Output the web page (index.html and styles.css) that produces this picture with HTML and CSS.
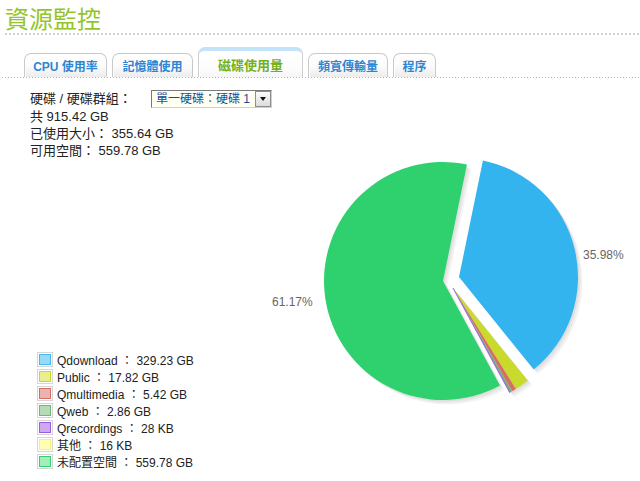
FILE: index.html
```html
<!DOCTYPE html>
<html lang="zh-Hant">
<head>
<meta charset="utf-8">
<title>資源監控</title>
<link rel="stylesheet" href="styles.css">
</head>
<body>
<div class="page">
  <h1 class="title">資源監控</h1>
  <div class="title-rule"></div>

  <div class="tabs">
    <div class="tab t1">CPU 使用率</div>
    <div class="tab t2">記憶體使用</div>
    <div class="tab t3 active">磁碟使用量</div>
    <div class="tab t4">頻寬傳輸量</div>
    <div class="tab t5">程序</div>
  </div>

  <div class="info">
    <div class="selector-row">
      <span class="sel-label">硬碟 / 硬碟群組：</span>
      <span class="select">
        <span class="select-text">單一硬碟：硬碟 1</span>
        <span class="select-btn"><span class="tri"></span></span>
      </span>
    </div>
    <div class="line">共 915.42 GB</div>
    <div class="line">已使用大小： 355.64 GB</div>
    <div class="line">可用空間： 559.78 GB</div>
  </div>

  <div class="chart">
    <ul class="legend">
      <li><span class="sw"><span class="c c-blue"></span></span>Qdownload ： 329.23 GB</li>
      <li><span class="sw"><span class="c c-yellow"></span></span>Public ： 17.82 GB</li>
      <li><span class="sw"><span class="c c-red"></span></span>Qmultimedia ： 5.42 GB</li>
      <li><span class="sw"><span class="c c-lgreen"></span></span>Qweb ： 2.86 GB</li>
      <li><span class="sw"><span class="c c-purple"></span></span>Qrecordings ： 28 KB</li>
      <li><span class="sw"><span class="c c-pale"></span></span>其他 ： 16 KB</li>
      <li><span class="sw"><span class="c c-green"></span></span>未配置空間 ： 559.78 GB</li>
    </ul>
    <svg class="pie" width="390" height="320" viewBox="0 0 390 320" xmlns="http://www.w3.org/2000/svg">
      <g class="shadow" fill="#000" fill-opacity="0.045">
        <g transform="translate(1.5,1.5)">
          <path d="M193,122 L249.97,226.48 A119,119 0 1 1 216.93,5.43 Z"/>
          <path d="M209,118 L232.93,1.43 A119,119 0 0 1 283.73,210.61 Z"/>
          <path d="M203,129 L277.73,221.61 A119,119 0 0 1 259.6,233.67 Z"/>
        </g>
        <g transform="translate(3,3)">
          <path d="M193,122 L249.97,226.48 A119,119 0 1 1 216.93,5.43 Z"/>
          <path d="M209,118 L232.93,1.43 A119,119 0 0 1 283.73,210.61 Z"/>
          <path d="M203,129 L277.73,221.61 A119,119 0 0 1 259.6,233.67 Z"/>
        </g>
        <g transform="translate(4.5,4.5)">
          <path d="M193,122 L249.97,226.48 A119,119 0 1 1 216.93,5.43 Z"/>
          <path d="M209,118 L232.93,1.43 A119,119 0 0 1 283.73,210.61 Z"/>
          <path d="M203,129 L277.73,221.61 A119,119 0 0 1 259.6,233.67 Z"/>
        </g>
      </g>
      <path fill="#2ed16e" d="M193,122 L249.97,226.48 A119,119 0 1 1 216.93,5.43 Z"/>
      <path fill="#33b4ef" d="M209,118 L232.93,1.43 A119,119 0 0 1 283.73,210.61 Z"/>
      <path fill="#c9da2c" d="M203,129 L277.73,221.61 A119,119 0 0 1 265.88,230.03 Z"/>
      <path fill="#d96d66" d="M203,129 L265.88,230.03 A119,119 0 0 1 262.14,232.27 Z"/>
      <path fill="#6fb870" d="M203,129 L262.14,232.27 A119,119 0 0 1 260.14,233.37 Z"/>
      <path fill="#9a5ce0" stroke="#9a5ce0" stroke-width="0.6" d="M203,129 L260.14,233.37 A119,119 0 0 1 259.6,233.67 Z"/>
      <text class="pct" x="333" y="100">35.98%</text>
      <text class="pct" x="22" y="147">61.17%</text>
    </svg>
  </div>
</div>
</body>
</html>
```

FILE: styles.css
```css
html, body {
  margin: 0;
  padding: 0;
  background: #ffffff;
  overflow: hidden;
}

body {
  font-family: "Liberation Sans", "Noto Sans CJK TC", sans-serif;
  color: #222;
}

.page {
  width: 640px;
  height: 481px;
}

.title {
  margin: 0;
  padding: 4px 0 0 5px;
  font-size: 24px;
  line-height: 28px;
  font-weight: normal;
  color: #93c52a;
  font-family: "Noto Sans CJK TC", "Liberation Sans", sans-serif;
}

.title-rule {
  margin: 1px 0 0 5px;
  height: 2px;
  background-image: linear-gradient(to right, #d2d2d2 2px, transparent 2px);
  background-size: 4px 2px;
  background-repeat: repeat-x;
}

.tabs {
  display: flex;
  align-items: flex-end;
  gap: 5px;
  margin-top: 12px;
  padding-left: 24px;
  height: 30px;
  background-image: linear-gradient(to right, #b8b8b8 1px, transparent 1px);
  background-size: 3px 1px;
  background-repeat: repeat-x;
  background-position: 5px bottom;
  padding-bottom: 1px;
}

.tab {
  box-sizing: border-box;
  height: 24px;
  padding-top: 5px;
  line-height: 16px;
  text-align: center;
  font-size: 12px;
  font-weight: bold;
  color: #2d86d2;
  border: 1px solid #c9c9c9;
  border-bottom: none;
  border-radius: 7px 7px 0 0;
  background: linear-gradient(#ffffff, #fbfbfb 55%, #ececec);
  box-shadow: inset 1px 1px 0 #ffffff;
  white-space: nowrap;
}

.t1 { width: 83px; }
.t2 { width: 81px; }
.t3 { width: 105px; }
.t4 { width: 80px; }
.t5 { width: 43px; }

.tab.active {
  height: 30px;
  padding-top: 7px;
  border-top: 4px solid #c2e3f8;
  border-color: #cfcfcf;
  border-top-color: #c2e3f8;
  background: linear-gradient(#ffffff, #fcfcfc 70%, #f5f5f5);
  color: #74b11a;
  font-size: 13px;
}

.info {
  padding-left: 30px;
  font-size: 13px;
  color: #222;
}

.selector-row {
  display: flex;
  align-items: center;
  margin-top: 12px;
  height: 18px;
}

.sel-label {
  width: 121px;
  line-height: 18px;
}

.select {
  box-sizing: border-box;
  display: flex;
  align-items: center;
  width: 121px;
  height: 18px;
  border: 1px solid #7a7a7a;
  border-right-color: #cfcfcf;
  border-bottom-color: #cfcfcf;
  background: #fffff2;
}

.select-text {
  flex: 1;
  padding-left: 4px;
  color: #1d4b9b;
  font-size: 12px;
  line-height: 16px;
  white-space: nowrap;
}

.select-btn {
  box-sizing: border-box;
  display: flex;
  align-items: center;
  justify-content: center;
  width: 16px;
  height: 16px;
  border: 1px solid #8e8e8e;
  background: linear-gradient(#fbfbfb, #dcdcdc);
}

.tri {
  width: 0;
  height: 0;
  border-left: 3.5px solid transparent;
  border-right: 3.5px solid transparent;
  border-top: 4px solid #111;
}

.line {
  line-height: 17px;
}

.chart {
  display: flex;
  height: 320px;
}

.legend {
  box-sizing: border-box;
  list-style: none;
  margin: 0;
  padding: 0 0 9px 37px;
  width: 250px;
  align-self: flex-end;
  font-size: 12px;
  color: #222;
}

.legend li {
  display: flex;
  align-items: center;
  height: 17px;
  white-space: nowrap;
}

.sw {
  display: inline-block;
  border: 1px solid #d6d6d6;
  padding: 1px;
  margin-right: 4px;
}

.c {
  display: block;
  width: 10px;
  height: 9px;
  border: 1px solid;
}

.c-blue   { background: #98d9f8; border-color: #45b8ef; }
.c-yellow { background: #e9ef8e; border-color: #c9d92c; }
.c-red    { background: #ebb3b0; border-color: #d86d66; }
.c-lgreen { background: #b6dab6; border-color: #74b674; }
.c-purple { background: #cfa8f2; border-color: #9a5ce0; }
.c-pale   { background: #ffffb4; border-color: #f3f37c; }
.c-green  { background: #a3edbd; border-color: #31d06f; }

.pie {
  display: block;
  flex: none;
}

.pct {
  font-family: "Liberation Sans", sans-serif;
  font-size: 12px;
  fill: #666666;
}
```
